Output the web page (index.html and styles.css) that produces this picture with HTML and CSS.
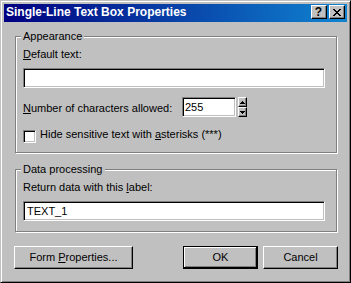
FILE: index.html
```html
<!DOCTYPE html>
<html>
<head>
<meta charset="utf-8">
<link rel="stylesheet" href="styles.css">
</head>
<body>
<div class="window">
  <div class="titlebar">
    <span class="title">Single-Line Text Box Properties</span>
    <div class="tb-buttons">
      <span class="tb-btn help">?</span>
      <span class="tb-btn close">
        <svg width="8" height="7" viewBox="0 0 8 7" shape-rendering="crispEdges"><path fill="#000" d="M0 0h2v1H0z M6 0h2v1H6z M1 1h2v1H1z M5 1h2v1H5z M2 2h4v1H2z M3 3h2v1H3z M2 4h4v1H2z M1 5h2v1H1z M5 5h2v1H5z M0 6h2v1H0z M6 6h2v1H6z"/></svg>
      </span>
    </div>
  </div>
  <div class="content">
    <div class="group g1">
      <span class="legend">Appearance</span>
      <div class="label"><u>D</u>efault text:</div>
      <div class="edit wide"></div>
      <div class="num-row">
        <span class="row-label"><u>N</u>umber of characters allowed:</span>
        <div class="edit spin">255</div>
        <div class="spinner">
          <span class="spin-btn"><svg width="5" height="3" viewBox="0 0 5 3" shape-rendering="crispEdges"><path fill="#000" d="M2 0h1v1H2z M1 1h3v1H1z M0 2h5v1H0z"/></svg></span>
          <span class="spin-btn"><svg width="5" height="3" viewBox="0 0 5 3" shape-rendering="crispEdges"><path fill="#000" d="M0 0h5v1H0z M1 1h3v1H1z M2 2h1v1H2z"/></svg></span>
        </div>
      </div>
      <div class="check-row">
        <span class="checkbox"></span>
        <span class="check-label">Hide sensitive text with <u>a</u>sterisks (***)</span>
      </div>
    </div>
    <div class="group g2">
      <span class="legend">Data processing</span>
      <div class="label">Return data with this <u>l</u>abel:</div>
      <div class="edit wide">TEXT_1</div>
    </div>
    <div class="buttons">
      <button class="btn form-props">Form <u>P</u>roperties...</button>
      <span class="spacer"></span>
      <button class="btn default">OK</button>
      <button class="btn">Cancel</button>
    </div>
  </div>
</div>
</body>
</html>
```

FILE: styles.css
```css
html, body {
  margin: 0;
  padding: 0;
  background: #c0c0c0;
}

.window {
  box-sizing: border-box;
  width: 351px;
  height: 283px;
  background: #c0c0c0;
  border: 1px solid;
  border-color: #c0c0c0 #000 #000 #c0c0c0;
  box-shadow: inset 1px 1px 0 #fff, inset -1px -1px 0 #808080;
  padding: 3px;
  font-family: "Liberation Sans", Arial, sans-serif;
  font-size: 11px;
  color: #000;
}

.titlebar {
  height: 18px;
  display: flex;
  align-items: flex-start;
  justify-content: space-between;
  padding-left: 2px;
  background: linear-gradient(to right, #000080, #1084d0);
}

.title {
  color: #fff;
  font-weight: bold;
  font-size: 12px;
  line-height: 14px;
  padding-top: 1px;
  white-space: nowrap;
}

.tb-buttons {
  display: flex;
  gap: 2px;
  margin-top: 1px;
  margin-right: 2px;
}

.tb-btn {
  box-sizing: border-box;
  width: 16px;
  height: 14px;
  background: #c0c0c0;
  border: 1px solid;
  border-color: #fff #000 #000 #fff;
  box-shadow: inset -1px -1px 0 #808080;
  display: flex;
  align-items: center;
  justify-content: center;
}

.help {
  font-weight: bold;
  font-size: 12px;
  line-height: 12px;
  padding-right: 1px;
}

.close svg {
  display: block;
  margin-top: 1px;
}

.content {
  padding: 14px 10px 0 11px;
}

.group {
  box-sizing: border-box;
  display: flex;
  flex-direction: column;
  align-items: flex-start;
  border: 1px solid #808080;
  box-shadow: inset 1px 1px 0 #fff, 1px 1px 0 #fff;
  padding: 0 11px 0 7px;
}

.g1 {
  height: 117px;
}

.g2 {
  height: 63px;
  margin-top: 16px;
}

.legend {
  line-height: 13px;
  margin-top: -7px;
  margin-left: -2px;
  padding: 0 2px;
  background: #c0c0c0;
}

.label {
  line-height: 13px;
  margin-top: 5px;
}

.edit {
  box-sizing: border-box;
  height: 20px;
  background: #fff;
  border: 1px solid;
  border-color: #808080 #fff #fff #808080;
  box-shadow: inset 1px 1px 0 #000, inset -1px -1px 0 #c0c0c0;
  line-height: 18px;
  padding: 0 3px;
}

.edit.wide {
  align-self: stretch;
  margin-top: 7px;
}

.num-row {
  display: flex;
  align-items: flex-start;
  margin-top: 9px;
  height: 20px;
}

.row-label {
  width: 159px;
  line-height: 13px;
  padding-top: 5px;
}

.edit.spin {
  width: 54px;
  padding: 0 2px;
}

.spinner {
  display: flex;
  flex-direction: column;
  margin-left: 2px;
}

.spin-btn {
  box-sizing: border-box;
  width: 9px;
  height: 10px;
  background: #c0c0c0;
  border: 1px solid;
  border-color: #fff #000 #000 #fff;
  box-shadow: inset -1px -1px 0 #808080;
  display: flex;
  align-items: center;
  justify-content: center;
}

.spin-btn svg {
  display: block;
  margin-right: 1px;
}

.check-row {
  display: flex;
  align-items: flex-start;
  margin-top: 13px;
}

.checkbox {
  box-sizing: border-box;
  width: 13px;
  height: 13px;
  background: #fff;
  border: 1px solid;
  border-color: #808080 #fff #fff #808080;
  box-shadow: inset 1px 1px 0 #000, inset -1px -1px 0 #c0c0c0;
}

.check-label {
  line-height: 13px;
  margin-left: 4px;
  margin-top: -2px;
}

.buttons {
  display: flex;
  gap: 5px;
  margin: 14px -1px 0 -1px;
}

.spacer {
  flex: 1;
}

.btn {
  box-sizing: border-box;
  width: 75px;
  height: 23px;
  padding: 0;
  background: #c0c0c0;
  border: 1px solid;
  border-color: #fff #000 #000 #fff;
  box-shadow: inset -1px -1px 0 #808080;
  font-family: "Liberation Sans", Arial, sans-serif;
  font-size: 11px;
  line-height: 13px;
  color: #000;
}

.btn.form-props {
  width: 119px;
}

.btn.default {
  border: 1px solid #000;
  box-shadow: inset -1px -1px 0 #000, inset 1px 1px 0 #fff, inset -2px -2px 0 #808080;
}
```
